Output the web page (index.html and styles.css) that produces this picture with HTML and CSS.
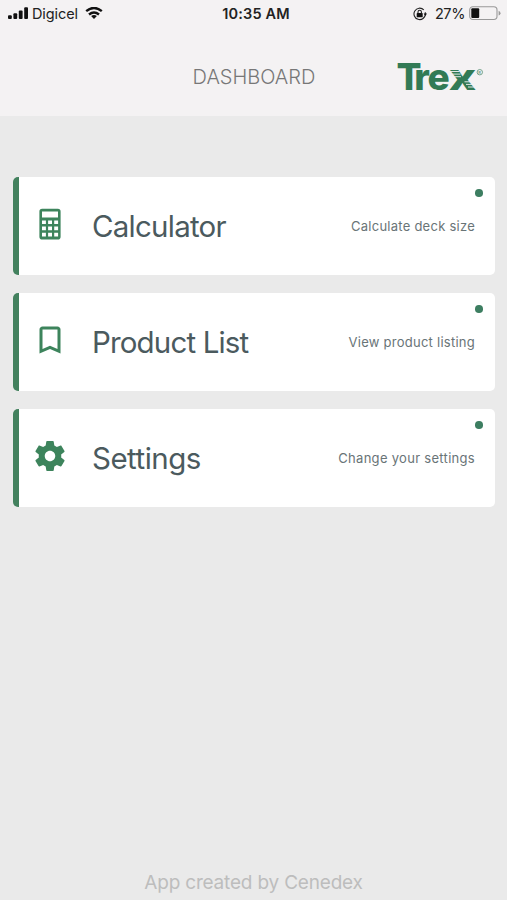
FILE: index.html
```html
<!DOCTYPE html>
<html lang="en">
<head>
<meta charset="utf-8">
<title>Dashboard</title>
<link rel="stylesheet" href="styles.css">
</head>
<body>
<div class="app">
  <header class="header">
    <div class="status">
      <div class="status-left">
        <svg class="signal" width="20" height="13" viewBox="0 0 20 13"><rect x="0" y="8.300" width="3.800" height="3.800" rx="1"/><rect x="5.400" y="6.300" width="3.800" height="5.800" rx="1"/><rect x="10.800" y="3.500" width="3.800" height="8.600" rx="1"/><rect x="16.200" y=".3" width="3.800" height="11.800" rx="1"/></svg>
        <span class="carrier">Digicel</span>
        <svg class="wifi" width="18" height="13" viewBox="0 0 18 13"><g fill="none" stroke="#111" stroke-width="2.4"><path d="M1.200 4.200Q9-2.300 16.800 4.200"/><path d="M4 7.500Q9 3.300 14 7.500"/></g><path d="M6.100 9.100Q9 7.100 11.900 9.100L9 12.100Z"/></svg>
      </div>
      <span class="time">10:35 AM</span>
      <div class="status-right">
        <svg class="lock" width="14" height="14" viewBox="0 0 14 14"><path d="M12.400 7A5.700 5.700 0 1 1 10.800 2.900M12.300 5.300V8.200" fill="none" stroke="#222" stroke-width="1.1"/><path d="M10.600 6.600H14L12.300 9Z"/><rect x="3.700" y="6.100" width="6" height="4.200" rx=".6"/><path d="M5 6.500V5a1.700 1.700 0 0 1 3.400 0v1.500" fill="none" stroke="#222" stroke-width="1.1"/></svg>
        <span class="percent">27%</span>
        <svg class="battery" width="32" height="15" viewBox="0 0 32 15"><rect x=".7" y=".7" width="27.300" height="12.800" rx="3.200" fill="none" stroke="#999" stroke-width="1.1"/><path d="M29.600 4.800v4.800q1.900-.7 1.900-2.400T29.600 4.800Z" fill="#999"/><rect x="2.300" y="2.300" width="7.900" height="9.600" rx="1"/></svg>
      </div>
    </div>
    <div class="navbar">
      <h1 class="title">DASHBOARD</h1>
      <svg class="logo" width="90" height="48" viewBox="0 -8 90 48">
        <text class="logo-text" x="-1.500 16.300 29.600" y="28.500">Tre</text>
        <text class="logo-text" x="50.800" y="28.500" textLength="27.500" lengthAdjust="spacingAndGlyphs">x</text>
        <path class="stripes" d="M52 10.500h9.500M53 13.100h9.500M55 15.700h8M66.500 20.800h9M68 23.400h10M70 26h10"/>
        <circle cx="81.800" cy="11.200" r="2.700" fill="none" stroke="#699c82" stroke-width=".9"/>
        <text class="registered" x="80.300" y="12.800">R</text>
      </svg>
    </div>
  </header>
  <main class="cards">
    <section class="card">
      <svg class="icon" viewBox="0 0 36 36"><path fill-rule="evenodd" d="M10.200 2.700h15.600a2.800 2.800 0 0 1 2.800 2.800v25.200a2.800 2.800 0 0 1-2.800 2.800H10.200a2.800 2.800 0 0 1-2.800-2.800V5.500a2.800 2.800 0 0 1 2.800-2.800ZM10 5.600v6h16v-6ZM10 14.400v3.600h3.900v-3.600ZM16.100 14.400v3.600H20v-3.600ZM22.200 14.400v3.600h3.900v-3.600ZM10 20.600v3.600h3.900v-3.600ZM16.100 20.600v3.600H20v-3.600ZM22.200 20.600v3.600h3.900v-3.600ZM10 26.800v3.600h3.900v-3.600ZM16.100 26.800v3.600H20v-3.600ZM22.200 26.800v3.600h3.900v-3.600Z"/></svg>
      <h2 class="name name-calculator">Calculator</h2>
      <p class="note">Calculate deck size</p>
      <i class="dot"></i>
    </section>
    <section class="card">
      <svg class="icon" viewBox="0 0 24 24"><path d="M17 3H7c-1.100 0-2 .9-2 2v16l7-3 7 3V5c0-1.100-.9-2-2-2zm0 15-5-2.180L7 18V5h10v13z"/></svg>
      <h2 class="name name-products">Product List</h2>
      <p class="note">View product listing</p>
      <i class="dot"></i>
    </section>
    <section class="card">
      <svg class="icon" viewBox="0 0 24 24"><path d="M19.430 12.980c.04-.32.07-.64.07-.98s-.03-.66-.07-.98l2.110-1.650c.19-.15.24-.42.12-.64l-2-3.460c-.12-.22-.39-.3-.61-.22l-2.490 1c-.52-.4-1.080-.73-1.690-.98l-.38-2.650C14.460 2.180 14.250 2 14 2h-4c-.25 0-.46.18-.49.42l-.38 2.650c-.61.25-1.170.59-1.690.98l-2.490-1c-.23-.09-.49 0-.61.22l-2 3.460c-.13.22-.07.49.12.64l2.110 1.650c-.04.32-.07.65-.07.98s.03.66.07.98l-2.110 1.650c-.19.15-.24.42-.12.64l2 3.460c.12.22.39.3.61.22l2.490-1c.52.4 1.080.73 1.690.98l.38 2.650c.03.24.24.42.49.42h4c.25 0 .46-.18.49-.42l.38-2.650c.61-.25 1.170-.59 1.690-.98l2.490 1c.23.09.49 0 .61-.22l2-3.460c.12-.22.07-.49-.12-.64l-2.110-1.650zM12 15.500c-1.930 0-3.500-1.570-3.500-3.500s1.570-3.500 3.500-3.500 3.500 1.570 3.500 3.500-1.570 3.500-3.500 3.500z"/></svg>
      <h2 class="name name-settings">Settings</h2>
      <p class="note note-settings">Change your settings</p>
      <i class="dot"></i>
    </section>
  </main>
  <footer class="footer">App created by Cenedex</footer>
</div>
</body>
</html>
```
FILE: styles.css
```css
* { box-sizing: border-box; }
body { margin: 0; font-family: Inter, "Liberation Sans", sans-serif; background: #eaeaea; }
h1, h2, p { margin: 0; font-weight: 400; }
svg { display: block; flex: none; }
.app { height: 900px; display: flex; flex-direction: column; overflow: hidden; }
.header { height: 115.5px; background: #f4f2f3; flex: none; }
.status { height: 28px; display: grid; grid-template-columns: 1fr auto 1fr; padding: 0 6px 0 8px; color: #222; font-size: 14.5px; line-height: 28px; white-space: nowrap; fill: #111; }
.status-left, .status-right { display: flex; align-items: center; }
.status-left svg, .battery { margin-bottom: 1px; }
.status-right { justify-content: flex-end; }
.carrier { margin: 0 7px 0 4px; letter-spacing: -0.1px; }
.time { font-weight: 600; letter-spacing: 0.15px; padding-left: 3px; }
.percent { margin: 0 4px 0 8px; letter-spacing: -0.4px; }
.navbar { height: 87px; display: grid; grid-template-columns: 1fr auto 1fr; align-items: center; padding: 0 19px; }
.title { grid-column: 2; font-size: 20px; font-weight: 300; color: #777; line-height: 24px; margin-top: 11px; padding-left: 1px; }
.logo { justify-self: end; margin-top: 11px; overflow: visible; }
.logo-text { font-size: 37px; font-weight: 800; fill: #327a55; }
.stripes { stroke: #f4f2f3; stroke-width: 0.9; fill: none; }
.registered { font-size: 4px; font-weight: 600; fill: #699c82; }
.cards { flex: 1; padding: 61.5px 12px 0 13px; display: flex; flex-direction: column; gap: 18px; }
.card { position: relative; height: 98px; flex: none; display: flex; align-items: center; background: #fff; border-left: 6.5px solid #43815e; border-radius: 5px; padding: 0 20px 0 12.8px; }
.icon { width: 36px; height: 36px; margin: 0 24.2px 4px 0; fill: #3d845c; }
.name { flex: 1; font-size: 29.5px; line-height: 36px; color: #4b5a5e; white-space: nowrap; }
.name-calculator { letter-spacing: -0.75px; }
.name-products { letter-spacing: -0.85px; }
.name-settings { letter-spacing: -0.5px; }
.note { font-size: 13px; line-height: 18px; letter-spacing: 0.25px; color: #697477; white-space: nowrap; }
.note-settings { letter-spacing: 0.3px; }
.dot { position: absolute; top: 12px; right: 12.3px; width: 7.6px; height: 7.6px; border-radius: 50%; background: #3d7e61; }
.footer { height: 35px; text-align: center; font-size: 19px; line-height: 36px; letter-spacing: -0.19px; color: #bdbdbd; }
```
